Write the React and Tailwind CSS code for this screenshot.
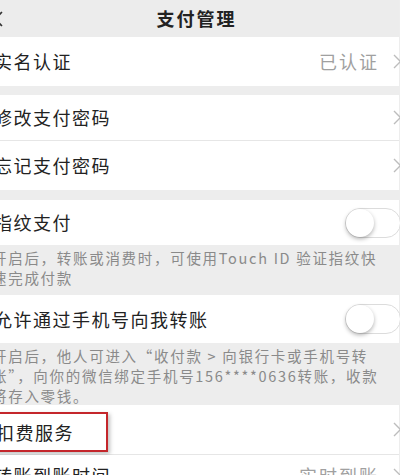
import React from 'react';

const font = { fontFamily: '"Noto Sans CJK SC", "Noto Sans", sans-serif' };

const Chevron = () => (
    <svg width="9" height="15" viewBox="0 0 9 15" className="shrink-0 -mr-[3px]">
        <path d="M1 1 L7.5 7.5 L1 14" fill="none" stroke="#bdbdbd" strokeWidth="1.4" />
    </svg>
);

const Toggle = () => (
    <div className="relative w-[56px] h-[30px] rounded-full bg-white border border-[#dcdcdc] shrink-0 -mr-[2px]">
        <div className="absolute left-0 top-0 w-[28px] h-[28px] rounded-full bg-white shadow-[0_2px_4px_rgba(0,0,0,0.3)]" />
    </div>
);

const Row = ({ label, value, h, toggle, divider, boxed }) => (
    <div className={`flex items-center bg-white ${h} ${divider ? 'border-b border-[#e6e6e6]' : ''}`}>
        <div className="flex-1 flex items-center">
            {boxed ? (
                <span className="-ml-[10px] mt-[5px] pl-[10px] pr-[32px] h-[40px] flex items-center border-2 border-[#c4262b] shadow-[2px_2px_4px_rgba(0,0,0,0.25)] text-[18px] tracking-[1.5px] text-[#222]">
                    {label}
                </span>
            ) : (
                <span className="text-[18px] tracking-[1.5px] text-[#222]">{label}</span>
            )}
        </div>
        {value && <span className="text-[18px] tracking-[2px] text-[#a0a0a0] mr-[14px]">{value}</span>}
        {toggle ? <Toggle /> : <Chevron />}
    </div>
);

const Desc = ({ lines, h }) => (
    <div className={`${h} pt-[3px] -ml-[2px] text-[14.5px] leading-[20px] tracking-[1.7px] text-[#8a8a8a]`}>
        {lines.map((l, i) => (
            <div key={i} className="whitespace-nowrap">{l}</div>
        ))}
    </div>
);

export default function App() {
    return (
        <div className="w-[400px] h-[475px] overflow-hidden bg-[#ededed]" style={font}>
            <div className="-ml-[6px] w-[405px] flex flex-col">
                <div className="h-[37px] grid grid-cols-[1fr_auto_1fr] items-center bg-[#ececec]">
                    <span className="-ml-[2px] text-[#333]">
                        <svg width="12" height="16" viewBox="0 0 12 16">
                            <path d="M10 1 L3 8 L10 15" fill="none" stroke="#333" strokeWidth="1.6" />
                        </svg>
                    </span>
                    <span className="text-[18px] font-bold tracking-[2px] text-[#222]">支付管理</span>
                    <span />
                </div>
                <Row label="实名认证" value="已认证" h="h-[49px]" />
                <div className="h-[9px]" />
                <Row label="修改支付密码" h="h-[46px]" divider />
                <Row label="忘记支付密码" h="h-[49px]" />
                <div className="h-[10px]" />
                <Row label="指纹支付" h="h-[45px]" toggle />
                <Desc h="h-[50px]" lines={['开启后，转账或消费时，可使用Touch ID 验证指纹快', '速完成付款']} />
                <Row label="允许通过手机号向我转账" h="h-[48px]" toggle />
                <Desc
                    h="h-[62px]"
                    lines={[
                        '开启后，他人可进入“收付款 > 向银行卡或手机号转',
                        '账”，向你的微信绑定手机号156****0636转账，收款',
                        '将存入零钱。',
                    ]}
                />
                <Row label="扣费服务" h="h-[50px]" divider boxed />
                <Row label="转账到账时间" value="实时到账" h="h-[40px]" />
            </div>
        </div>
    );
}
